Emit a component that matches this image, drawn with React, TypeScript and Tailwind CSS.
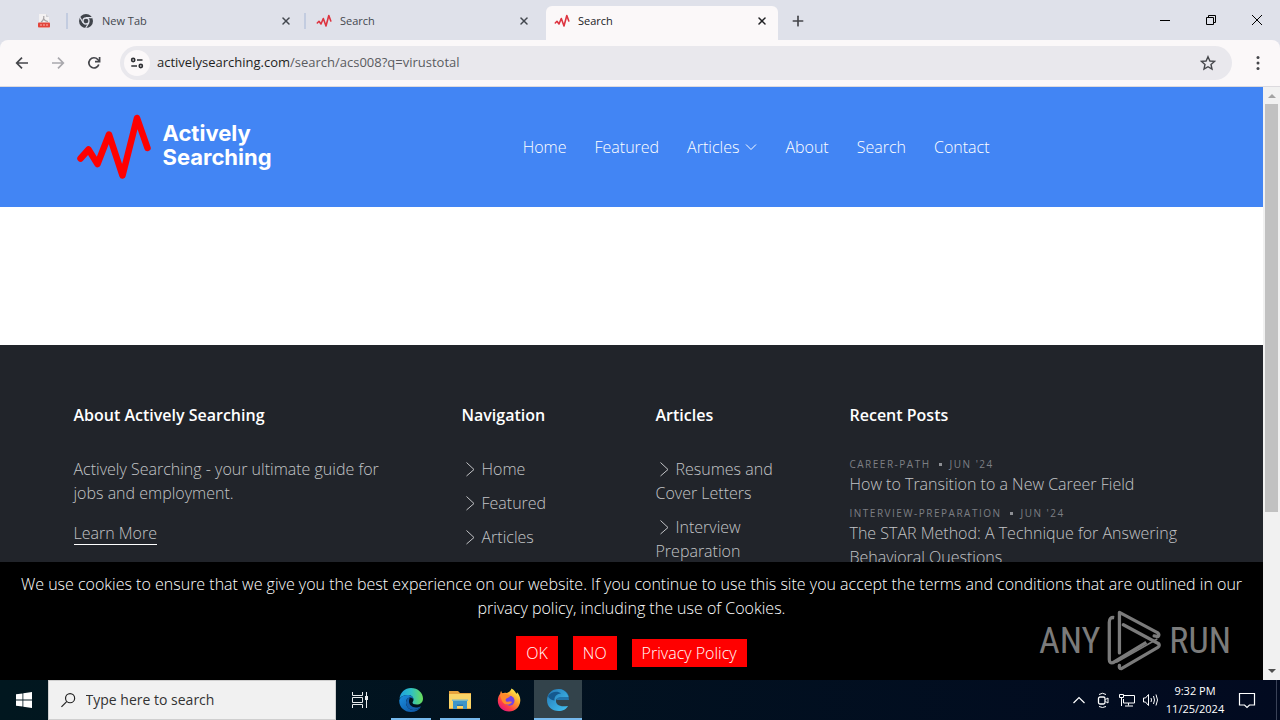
import type { ReactNode } from "react";
import { ChevronUp, Plus, X } from "lucide-react";
import clsx from "clsx";

const NAV = ["Home", "Featured", "Articles", "About", "Search", "Contact"];

const FOOTER_NAV = ["Home", "Featured", "Articles"];

const FOOTER_ARTICLES = ["Resumes and Cover Letters", "Interview Preparation"];

const POSTS = [
  { category: "Career-Path", date: "Jun '24", title: "How to Transition to a New Career Field" },
  {
    category: "Interview-Preparation",
    date: "Jun '24",
    title: "The STAR Method: A Technique for Answering Behavioral Questions",
  },
];

/* ---------- icons ---------- */

function PulseIcon({ className }: { className?: string }) {
  return (
    <svg viewBox="0 0 74 66" className={className} fill="none" stroke="currentColor" strokeWidth="6.500" strokeLinecap="round" strokeLinejoin="round">
      <path d="M3.500 44.500 11.500 35.500 20.500 50 32 20.500 45.500 61.500 60 4 70.500 34" />
    </svg>
  );
}

function Favicon() {
  return (
    <svg viewBox="0 0 16 16" className="mb-1 size-4" fill="none" stroke="#dd3440" strokeWidth="1.600" strokeLinecap="round" strokeLinejoin="round">
      <path d="M1.300 10 3 8.300 5 11 7.300 5.500 10 13 12.800 2.500 14.800 8" />
    </svg>
  );
}

function PdfIcon() {
  return (
    <svg viewBox="0 0 16 16" className="size-4">
      <path d="M3 1h7l3 3v11H3z" fill="#f3f1f2" />
      <path d="M10 1v3h3z" fill="#cfcfd4" />
      <path d="M5 9c2-1 3-3.500 2.800-6M7.500 5.500C8.500 7.500 10 8.500 12 8.500" stroke="#a9a4a6" strokeWidth="1.200" fill="none" />
      <rect x="2" y="9.500" width="12" height="5" rx="1" fill="#e2443b" />
      <path d="M4 12h2M7 12h2M10 12h2" stroke="#f29089" strokeWidth="1.500" />
    </svg>
  );
}

function ChromeIcon() {
  return (
    <svg viewBox="0 0 16 16" className="mb-1 size-4">
      <circle cx="8" cy="8" r="7" fill="#40444b" />
      <circle cx="8" cy="8" r="3" fill="#40444b" stroke="#dfe1ea" strokeWidth="1.300" />
      <path d="M8 4.600h6.500M5.100 9.700 1.900 4.200M10.900 9.700 7.700 15" stroke="#dfe1ea" strokeWidth="1.200" />
    </svg>
  );
}

function ArrowIcon({ flip }: { flip?: boolean }) {
  return (
    <svg viewBox="0 0 16 16" className={clsx("size-4", flip ? "-scale-x-100 text-[#a9a8ad]" : "text-[#45464b]")} fill="none" stroke="currentColor" strokeWidth="1.700">
      <path d="M14 8H3M8 2.700 2.700 8 8 13.300" />
    </svg>
  );
}

function ReloadIcon() {
  return (
    <svg viewBox="0 0 16 16" className="size-4 text-[#45464b]" fill="none" stroke="currentColor" strokeWidth="1.700">
      <path d="M12.800 9.500A5.100 5.100 0 1 1 11.800 4.500L13.500 6.200" />
      <path d="M13.600 2v4.600H9" />
    </svg>
  );
}

function TuneIcon() {
  return (
    <svg viewBox="0 0 16 16" className="size-4" fill="none" stroke="#2e2f33" strokeWidth="1.600">
      <circle cx="4.200" cy="5" r="1.600" />
      <path d="M8 5h5.500M2.300 11H8" />
      <circle cx="11.800" cy="11" r="1.600" />
    </svg>
  );
}

function ChevronRightThin() {
  return (
    <svg viewBox="0 0 16 16" className="mr-1 inline-block size-4 align-[-2px]" fill="none" stroke="currentColor">
      <path d="M4.500 1.500 12 8.500 4.500 15" />
    </svg>
  );
}

function AnyRunPlay() {
  return (
    <svg viewBox="268 26 168 192" className="h-[63px] w-[55px]" fill="none" stroke="#7b7b7b" strokeWidth="10" strokeLinecap="round" strokeLinejoin="round">
      <path d="M290 52Q275 50 275 66V180Q275 192 286 190L388 128" strokeLinecap="butt" />
      <path d="M306 160V36L422 98Q430 104 424 110L412 108" />
      <path d="M318 74 426 132Q430 138 422 144L312 208Q304 208 306 198" />
      <path d="M298 188 420 118" strokeWidth="5" />
    </svg>
  );
}

function WindowsLogo() {
  return (
    <svg viewBox="0 0 16 16" className="size-4" fill="#fff">
      <path d="M0 2.300 6.500 1.400V7.600H0zM7.300 1.300 16 0v7.600H7.300zM0 8.400h6.500v6.200L0 13.700zM7.300 8.400H16V16l-8.700-1.300z" />
    </svg>
  );
}

function TaskViewIcon() {
  return (
    <svg viewBox="0 0 18 18" className="size-[18px]" fill="none" stroke="#e8ecee">
      <path d="M1.500 1v3.500h10V1M1.500 17v-3.500h10V17M1.500 6.500h10v5h-10zM15.500 1v16" />
      <rect x="14.500" y="5.500" width="2" height="3" fill="#e8ecee" />
    </svg>
  );
}

function EdgeIcon() {
  return (
    <svg viewBox="0 0 24 24" className="size-6">
      <defs>
        <linearGradient id="edge-top" x1="0" y1="0.400" x2="1" y2="0.400">
          <stop offset="0" stopColor="#1d9fe0" />
          <stop offset="0.500" stopColor="#2fc0c4" />
          <stop offset="1" stopColor="#6ade58" />
        </linearGradient>
        <linearGradient id="edge-low" x1="0" y1="0" x2="1" y2="1">
          <stop offset="0" stopColor="#1b8fdf" />
          <stop offset="1" stopColor="#0b4f9e" />
        </linearGradient>
      </defs>
      <path d="M.5 11C1 4.500 6 0 12 0c7 0 12 5 12 10.500 0 4-3 6-6.200 6-3 0-4.300-1-4.300-2 0-.7 1-1.200 1-3 0-2.500-2.300-4.500-5.500-4.500C4.500 7 1.500 9 .5 11z" fill="url(#edge-top)" />
      <path d="M.3 12C1.500 8.800 4.800 7 8.500 7c3.500 0 6 2 6 4.500 0 0-1-2-3.300-2C8.500 9.500 7 12 7 14.500c0 4.500 3.500 7.500 7.500 7.500 2.500 0 5-1 7.500-3-2 3-5.500 5-10 5C5 24-.3 18.500.3 12z" fill="url(#edge-low)" />
      <path d="M11 9.600C8.700 10 7 12 7 14.500c0 4.500 3.500 7.500 7.500 7.500 3 0 6-1.500 7.700-3.700-2 .9-3.700 1.200-5.200 1.200-4.500 0-7-3.200-7-6 0-1.500.5-3 1-3.900z" fill="#1460ad" />
    </svg>
  );
}

function FolderIcon() {
  return (
    <svg viewBox="0 0 22 20" className="h-5 w-[22px]">
      <path d="M0 1h9l2 2h11v16H0z" fill="#e8a33d" />
      <path d="M0 4h22v14H0z" fill="#fbd567" />
      <path d="M4 11h14v8h-4v-4H8v4H4z" fill="#3f95c9" />
      <path d="M3 9.500h16V11H3z" fill="#7fb9c4" />
      <path d="M8 14.500h6v1.500H8z" fill="#2a74ae" />
    </svg>
  );
}

function FirefoxIcon() {
  return (
    <svg viewBox="0 0 24 24" className="size-6">
      <defs>
        <linearGradient id="ff-body" x1="0.850" y1="0.100" x2="0.200" y2="0.950">
          <stop offset="0" stopColor="#fff04d" />
          <stop offset="0.400" stopColor="#ff9a2b" />
          <stop offset="0.750" stopColor="#ff3d47" />
          <stop offset="1" stopColor="#e3157f" />
        </linearGradient>
      </defs>
      <path d="M14.500.5c3 1.800 4.200 3.500 4.700 5.200.8-.3.800-1.500.8-1.500 2 2 3.500 5 3.300 8.500C23 19 18 23.500 12 23.500S.8 19 .8 12.700c0-3.200 1.200-5.500 2.400-7 0 0 .2-2 1-3 .1 1 .6 2 1.300 2.500C7 4.500 8.500 4.500 9.500 5c2-.3 4-1.800 5-4.500z" fill="url(#ff-body)" />
      <circle cx="12.500" cy="12.800" r="5" fill="#7542e5" />
      <path d="M3 7c2-2 5-2 6.500-.7 1.800.2 3 .7 3.500 2-1.300 1.800-3.800 1.500-4.300 3.200-.3 1.500.8 2.500 2.300 2.200 1.500-.2 2.600-.6 4 .3-2 3.500-8 3.500-10-1C4.200 11 3.500 9 3 7z" fill="#ff8a2b" />
    </svg>
  );
}

function CIcon() {
  return (
    <svg viewBox="0 0 24 24" className="size-6">
      <defs>
        <linearGradient id="c-low" x1="0" y1="0" x2="1" y2="1">
          <stop offset="0" stopColor="#2377b4" />
          <stop offset="1" stopColor="#43c3f4" />
        </linearGradient>
      </defs>
      <path d="M12.500 1C17 1 21 3.500 22.500 7.500L23 12H11l-1-3z" fill="#2274ac" />
      <path d="M12.500 1C6 1 1 5.800 1 12.200S6 23 12.500 23c4.500 0 8-2 9.500-5-5 .6-8.500.3-10.500-1.500-1.500-1.300-2-3.500-1-5.500.8-1.500 2.500-2 4.500-2h7.500C21 4 17 1 12.500 1z" fill="url(#c-low)" />
      <path d="M2 8C6 3 12 3 15 5.500c-4 0-7 3-6.500 7C5 12 3 10.500 2 8z" fill="#14598f" />
    </svg>
  );
}

function TrayIcons() {
  return (
    <>
      <svg viewBox="0 0 18 16" className="h-4 w-[18px]" fill="none" stroke="currentColor" strokeWidth="1.200">
        <path d="m3.500 11 5.500-5.500 5.500 5.500" />
      </svg>
      <svg viewBox="0 0 16 16" className="h-4 w-[18px]" fill="none" stroke="currentColor">
        <rect x="3.500" y="5" width="6.500" height="7" rx="1.500" strokeWidth="1.300" />
        <path d="m10.500 7.500 2.500-1.500v5L10.500 9.500M4 2.500Q7.500 0 11 2.500M4 14.500q3.500 2 7 0" />
      </svg>
      <svg viewBox="0 0 18 16" className="h-4 w-[18px]" fill="none" stroke="currentColor">
        <path d="M6 3.500h10.500v7.500H5.500V7M10.500 11v2.500M7 14h8" />
        <path d="M1.500 2.500h4v3h-4zM3.500 5.500V14" />
      </svg>
      <svg viewBox="0 0 18 16" className="h-4 w-[18px]" fill="none" stroke="currentColor">
        <path d="M1.500 6h2l3-3.500v11l-3-3.500h-2zM9 6q1 2 0 4M11.500 4q2 4 0 8M14 2.500q3 5.500 0 11" />
      </svg>
    </>
  );
}

/* ---------- browser chrome ---------- */

function Tab({ icon, title, active }: { icon: ReactNode; title: string; active?: boolean }) {
  return (
    <div
      className={clsx(
        "flex h-[34px] min-w-0 flex-[0_1_232px] items-center rounded-t-md px-2 text-[11px]",
        active ? "bg-[#fbf8f9] text-[#202124]" : "text-[#43474e]"
      )}
    >
      {icon}
      <span className="ml-2 flex-1 truncate pb-1">{title}</span>
      <button aria-label="Close tab" className="mb-1 flex size-4 items-center justify-center">
        <X className="size-3" strokeWidth={3} />
      </button>
    </div>
  );
}

function TabDivider() {
  return <span className="mx-[2px] mb-1 h-4 w-[2px] bg-[#c3cce0]" />;
}

function BrowserTop() {
  return (
    <header className="font-['Open_Sans',sans-serif]">
      <div className="flex h-10 items-end bg-[#dfe1ea]">
        <div className="flex h-[34px] items-center pb-1 pl-9">
          <PdfIcon />
        </div>
        <div className="flex h-[34px] min-w-0 flex-1 items-center pl-3">
          <TabDivider />
          <Tab icon={<ChromeIcon />} title="New Tab" />
          <TabDivider />
          <Tab icon={<Favicon />} title="Search" />
          <span className="w-[6px]" />
          <Tab icon={<Favicon />} title="Search" active />
          <button aria-label="New tab" className="mb-1 ml-3 text-[#45464b]">
            <Plus className="size-4" strokeWidth={2.500} />
          </button>
        </div>
        <div className="flex h-10 w-[138px] items-center justify-around text-black">
          <button aria-label="Minimize">
            <svg viewBox="0 0 10 10" className="size-[10px]" stroke="currentColor">
              <path d="M0 5.500h10" />
            </svg>
          </button>
          <button aria-label="Restore">
            <svg viewBox="0 0 10 10" className="size-[10px]" fill="none" stroke="currentColor">
              <path d="M.5 2.500h7v7h-7zM2.500 2.500v-2h7v7h-2" />
            </svg>
          </button>
          <button aria-label="Close">
            <svg viewBox="0 0 10 10" className="size-[10px]" stroke="currentColor">
              <path d="m0 0 10 10M10 0 0 10" />
            </svg>
          </button>
        </div>
      </div>

      <div className="bg-[#dfe1ea]">
        <div className="flex h-[47px] items-center rounded-t-lg border-b border-[#dcdade] bg-[#fbf8f9] px-[14px]">
          <button aria-label="Back"><ArrowIcon /></button>
          <button aria-label="Forward" className="ml-5"><ArrowIcon flip /></button>
          <button aria-label="Reload" className="ml-5"><ReloadIcon /></button>
          <div className="ml-[18px] flex h-[34px] flex-1 items-center rounded-full bg-[#e9e8ed] pr-4 pl-1">
            <button aria-label="Site information" className="flex size-[26px] items-center justify-center rounded-full bg-[#fbf8f9]">
              <TuneIcon />
            </button>
            <a href="#url" className="ml-[7px] flex-1 text-[13px] text-[#5a5b60]">
              <span className="text-[#1f1f22]">activelysearching.com</span>/search/acs008?q=virustotal
            </a>
            <button aria-label="Bookmark this tab">
              <svg viewBox="0 0 16 16" className="size-4" fill="none" stroke="#45464b" strokeWidth="1.400">
                <path d="m8 1.700 1.900 4.300 4.600.4-3.500 3.100 1 4.600-4-2.400-4 2.400 1-4.600-3.500-3.100 4.600-.4z" />
              </svg>
            </button>
          </div>
          <button aria-label="Menu" className="ml-[18px]">
            <svg viewBox="0 0 16 16" className="size-4" fill="#45464b">
              <circle cx="8" cy="2.500" r="1.500" />
              <circle cx="8" cy="8" r="1.500" />
              <circle cx="8" cy="13.500" r="1.500" />
            </svg>
          </button>
        </div>
      </div>
    </header>
  );
}

/* ---------- web page ---------- */

function SiteHeader() {
  return (
    <div className="bg-[#4285f4]">
      <div className="mx-auto flex h-[120px] max-w-[1140px] items-center px-3 text-white">
        <a href="#home" className="ml-[3px] flex items-center gap-3">
          <PulseIcon className="h-[66px] w-[74px] text-[#ff0000]" />
          <span className="pb-1 text-[22px] leading-6 font-bold font-['Inter',sans-serif]">
            Actively
            <br />
            Searching
          </span>
        </a>
        <nav className="ml-auto flex gap-7 pr-[200px]">
          {NAV.map((item) => (
            <a key={item} href={`#${item.toLowerCase()}`} className="flex items-center gap-[6px]">
              {item}
              {item === "Articles" && (
                <svg viewBox="0 0 12 12" className="size-3" fill="none" stroke="currentColor">
                  <path d="m1 3.500 5 5 5-5" />
                </svg>
              )}
            </a>
          ))}
        </nav>
      </div>
    </div>
  );
}

function FooterColumn({ title, wide, children }: { title: string; wide?: boolean; children: ReactNode }) {
  return (
    <section className={wide ? "col-span-2" : "col-span-1"}>
      <h2 className="mb-[30px] font-semibold text-white">{title}</h2>
      {children}
    </section>
  );
}

function FooterLinks({ items }: { items: string[] }) {
  return (
    <ul className="space-y-[10px]">
      {items.map((item) => (
        <li key={item}>
          <a href="#link">
            <ChevronRightThin />
            {item}
          </a>
        </li>
      ))}
    </ul>
  );
}

function SiteFooter() {
  return (
    <footer className="bg-[#21242a] text-[#c3c4c7]">
      <div className="mx-auto grid max-w-[1140px] grid-cols-6 gap-12 px-3 py-[58px]">
        <FooterColumn title="About Actively Searching" wide>
          <p className="pr-6">Actively Searching - your ultimate guide for jobs and employment.</p>
          <a href="#more" className="mt-[18px] inline-block border-b border-white leading-[21px]">
            Learn More
          </a>
        </FooterColumn>
        <FooterColumn title="Navigation">
          <FooterLinks items={FOOTER_NAV} />
        </FooterColumn>
        <FooterColumn title="Articles">
          <FooterLinks items={FOOTER_ARTICLES} />
        </FooterColumn>
        <FooterColumn title="Recent Posts" wide>
          <div className="space-y-[10px]">
            {POSTS.map((post) => (
              <article key={post.title}>
                <div className="flex items-center gap-2 text-[10px] leading-[15px] font-normal tracking-[1.5px] text-[#7d7f84] uppercase">
                  <span>{post.category}</span>
                  <span className="size-[3px] bg-[#8d8f94]" />
                  <span>{post.date}</span>
                </div>
                <a href="#post">{post.title}</a>
              </article>
            ))}
          </div>
        </FooterColumn>
      </div>
    </footer>
  );
}

function CookieBanner() {
  return (
    <div className="relative bg-black px-5 py-[10px] text-center text-white">
      <p>
        We use cookies to ensure that we give you the best experience on our website. If you continue to use this site
        you accept the terms and conditions that are outlined in our privacy policy, including the use of Cookies.
      </p>
      <div className="mt-4 flex items-center justify-center gap-[15px]">
        <button className="bg-[#ff0000] px-[10px] py-[5px]">OK</button>
        <button className="bg-[#ff0000] px-[10px] py-[5px]">NO</button>
        <a href="#privacy" className="bg-[#ff0000] px-[10px] py-[2px]">Privacy Policy</a>
      </div>
      <div className="absolute right-8 bottom-2 flex items-center gap-[7px] text-[36px] leading-none font-normal text-[#7b7b7b] font-['Liberation_Sans_Narrow','Roboto_Condensed',sans-serif]">
        <span>ANY</span>
        <AnyRunPlay />
        <span>RUN</span>
      </div>
    </div>
  );
}

function ScrollBar() {
  return (
    <div className="flex w-[17px] flex-col items-center bg-[#f1f1f1] py-[6px]" aria-hidden="true">
      <svg viewBox="0 0 8 5" className="mb-[6px] h-[5px] w-2" fill="#a3a3a3">
        <path d="M0 5 4 1l4 4z" />
      </svg>
      <div className="w-[13px] flex-[408] bg-[#c1c1c1]" />
      <div className="flex-[151]" />
      <svg viewBox="0 0 8 5" className="mt-[6px] h-[5px] w-2" fill="#505050">
        <path d="m0 0 4 4 4-4z" />
      </svg>
    </div>
  );
}

/* ---------- taskbar ---------- */

function TaskButton({ label, running, active, children }: { label: string; running?: boolean; active?: boolean; children: ReactNode }) {
  return (
    <button
      aria-label={label}
      className={clsx("relative flex h-10 w-12 items-center justify-center", active && "bg-[#33434b]")}
    >
      {children}
      {running && <span className={clsx("absolute bottom-0 h-[2px] bg-[#76b9ed]", active ? "inset-x-0" : "inset-x-1")} />}
    </button>
  );
}

function Taskbar() {
  return (
    <footer className="flex h-10 items-center bg-linear-to-r from-[#01171f] to-[#020a20] font-['Open_Sans',sans-serif] text-white">
      <TaskButton label="Start"><WindowsLogo /></TaskButton>
      <label className="flex h-10 w-72 items-center border border-[#cfcfcf] bg-[#f1f1f1] pl-3">
        <svg viewBox="0 0 16 16" className="size-4" fill="none" stroke="#222" strokeWidth="1.300">
          <circle cx="10" cy="6" r="5" />
          <path d="M6.500 9.500.5 15.500" />
        </svg>
        <input
          aria-label="Search Windows"
          placeholder="Type here to search"
          className="ml-[10px] w-full bg-transparent text-sm text-[#333] outline-none placeholder:text-[#333]"
        />
      </label>
      <TaskButton label="Task View"><TaskViewIcon /></TaskButton>
      <div className="ml-[3px] flex gap-px">
        <TaskButton label="Microsoft Edge" running><EdgeIcon /></TaskButton>
        <TaskButton label="File Explorer" running><FolderIcon /></TaskButton>
        <TaskButton label="Firefox"><FirefoxIcon /></TaskButton>
        <TaskButton label="Browser" running active><CIcon /></TaskButton>
      </div>
      <div className="ml-auto flex items-center gap-[6px]">
        <TrayIcons />
      </div>
      <time className="ml-[3px] w-16 text-center text-[11px] leading-[18px]">
        9:32 PM
        <br />
        11/25/2024
      </time>
      <button aria-label="Notifications" className="ml-[11px]">
        <svg viewBox="0 0 18 18" className="size-[18px]" fill="none" stroke="currentColor" strokeWidth="1.200">
          <path d="M1.500 2.500h15v11.500h-5l-2.500 2.500L6.500 14h-5z" />
        </svg>
      </button>
      <span className="ml-5 h-full w-px bg-[#3a4257]" />
      <span className="w-[3px]" />
    </footer>
  );
}

export default function App() {
  return (
    <div className="flex h-screen flex-col overflow-hidden bg-white">
      <BrowserTop />
      <div className="flex min-h-0 flex-1">
        <main className="flex min-w-0 flex-1 flex-col text-base font-light font-['Open_Sans',sans-serif]">
          <div className="min-h-0 flex-1 overflow-hidden">
            <SiteHeader />
            <div className="h-[138px]" />
            <SiteFooter />
          </div>
          <CookieBanner />
        </main>
        <ScrollBar />
      </div>
      <Taskbar />
    </div>
  );
}
